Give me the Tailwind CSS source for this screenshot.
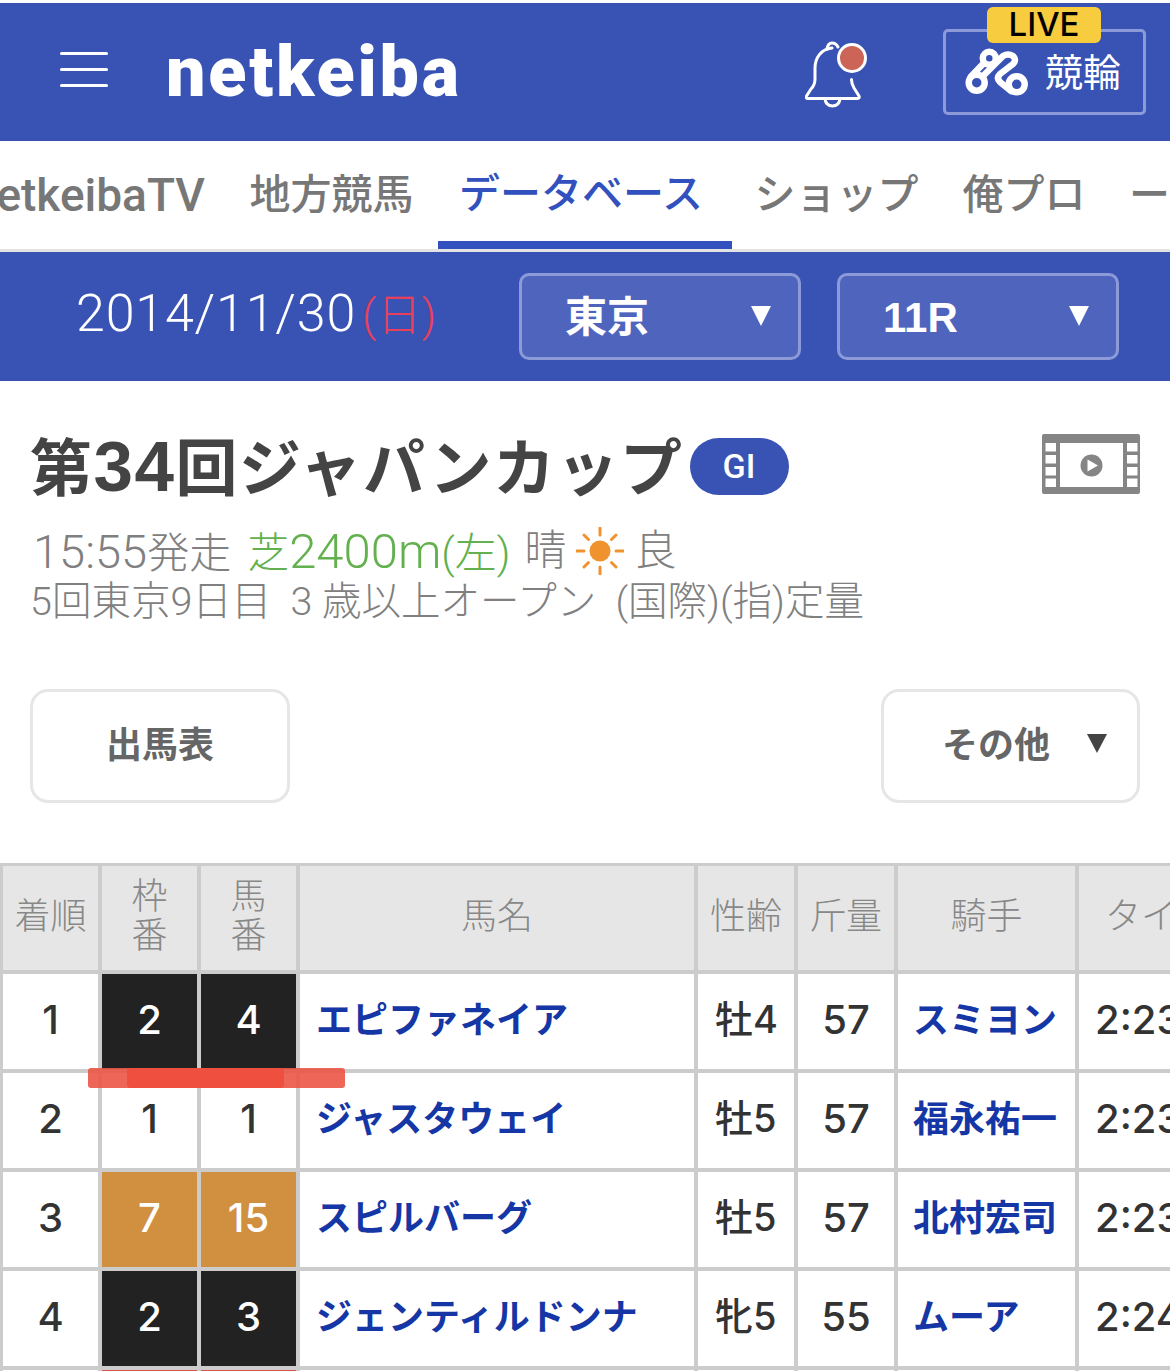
<!DOCTYPE html>
<html lang="ja">
<head>
<meta charset="UTF-8" />
<meta name="viewport" content="width=device-width, initial-scale=1.0" />
<title>netkeiba</title>
<script src="https://cdn.jsdelivr.net/npm/@tailwindcss/browser@4"></script>
</head>
<body class="bg-white font-['Liberation_Sans','Noto_Sans_CJK_JP',sans-serif] w-[1170px] h-[1371px] overflow-hidden">

<!-- Header -->
<div class="mt-[3px] h-[138px] bg-[#3953b5] flex items-center relative text-white">
  <div class="ml-[60px] w-[48px] flex flex-col gap-[13px] mt-[-6px]">
    <div class="h-[3px] bg-white rounded-full"></div>
    <div class="h-[3px] bg-white rounded-full"></div>
    <div class="h-[3px] bg-white rounded-full"></div>
  </div>
  <div class="ml-[58px] w-[294px] font-['Roboto'] font-black text-[70px] leading-none tracking-[2.800px]">netkeiba</div>
  <svg class="ml-[345px] mt-[6px]" width="64" height="68" viewBox="0 0 64 68" fill="none" stroke="white" stroke-width="3" stroke-linecap="round" stroke-linejoin="round">
    <path d="M27 7C16 8 10 17 10 27L10 38Q10 44 6 48L1.500 55Q0.500 57.500 3 57.500L52 57.500Q55 57.500 54 55L49 47Q46.500 43 46.500 38.500"/>
    <path d="M22 8Q23 2 27 2Q31 2 33 6"/>
    <path d="M20 58Q21 65 27.500 65Q34 65 35 58"/>
    <circle cx="47" cy="17" r="13.500" fill="#cc6558"/>
  </svg>
  <div class="ml-[74px] w-[203px] h-[86px] border-[3px] border-[#8c9bd8] rounded-[5px] flex items-center relative">
    <div class="absolute left-[41px] top-[-25px] w-[114px] h-[36px] bg-[#f8cc3f] rounded-[6px] text-black font-['Inter'] font-medium text-[33px] leading-[34px] text-center">LIVE</div>
    <svg class="ml-[14px] mt-[-2px] shrink-0" width="75" height="60" viewBox="0 0 75 60" fill="none" stroke="white" stroke-width="6.500" stroke-linecap="round" stroke-linejoin="round">
      <circle cx="16.700" cy="41.700" r="8"/>
      <circle cx="56.700" cy="43.300" r="8"/>
      <circle cx="29.300" cy="17.300" r="6.500"/>
      <path d="M22 24L11 35.500"/>
      <path d="M23 35L43 15Q48 12 53 15Q57 19 53 23L40 33Q36 37 40 41L51 50"/>
    </svg>
    <div class="ml-[10px] text-[38px] leading-none mt-[2px] whitespace-nowrap">競輪</div>
  </div>
</div>

<!-- Tabs -->
<div class="h-[111px] border-b-[3px] border-[#e3e3e3] flex text-[41px] leading-none font-medium text-[#777] overflow-hidden whitespace-nowrap">
  <div class="w-[227px] shrink-0 flex justify-end items-center pr-[22px] overflow-hidden font-['Roboto'] text-[46px]">netkeibaTV</div>
  <div class="w-[211px] shrink-0 flex justify-center items-center pr-[2px]">地方競馬</div>
  <div class="w-[294px] shrink-0 h-[108px] flex justify-center items-center pt-[6px] pr-[8px] text-[#3251be] border-b-[8px] border-[#3251be] mb-[-3px]">データベース</div>
  <div class="w-[209px] shrink-0 flex justify-center items-center">ショップ</div>
  <div class="w-[166px] shrink-0 flex justify-center items-center">俺プロ</div>
  <div class="shrink-0 flex items-center pl-[22px]">ー</div>
</div>

<!-- Date bar -->
<div class="h-[129px] bg-[#3953b5] flex items-center text-white">
  <div class="ml-[76px] w-[443px] font-['Roboto','Noto_Sans_CJK_JP'] text-[52px] leading-none font-light tracking-[0.800px] mt-[-6px]">2014/11/30<span class="text-[#e8405a] text-[44px] ml-[6px]">(日)</span></div>
  <div class="w-[282px] h-[87px] bg-[#4f65bd] border-[3px] border-[#8c9bd8] rounded-[10px] flex items-center pl-[43px] pr-[27px] justify-between font-bold text-[42px] mt-[-1px]">
    <span class="mt-[3px]">東京</span>
    <span class="w-0 h-0 border-x-[10px] border-x-transparent border-t-[20px] border-t-white"></span>
  </div>
  <div class="ml-[36px] w-[282px] h-[87px] bg-[#4f65bd] border-[3px] border-[#8c9bd8] rounded-[10px] flex items-center pl-[43px] pr-[27px] justify-between font-bold text-[42px] mt-[-1px]">
    <span class="mt-[3px]">11R</span>
    <span class="w-0 h-0 border-x-[10px] border-x-transparent border-t-[20px] border-t-white"></span>
  </div>
</div>

<!-- Race info -->
<div class="px-[30px]">
  <div class="flex items-center h-[60px] mt-[55px] relative">
    <h1 class="text-[62px] leading-none font-bold text-[#444] tracking-[1.500px] whitespace-nowrap">第<span class="text-[71px]">34</span>回ジャパンカップ</h1>
    <span class="ml-[6px] w-[99px] h-[57px] rounded-full bg-[#3953b5] text-white font-['Roboto'] font-medium text-[34px] flex items-center justify-center">GI</span>
    <svg class="ml-auto mt-[-4px]" width="98" height="60" viewBox="0 0 98 60">
      <rect width="98" height="60" rx="2" fill="#858585"/>
      <g fill="white">
        <rect x="3.500" y="9" width="10.500" height="8.500"/><rect x="3.500" y="21" width="10.500" height="8.500"/><rect x="3.500" y="33" width="10.500" height="8.500"/><rect x="3.500" y="44.500" width="10.500" height="8.500"/>
        <rect x="85" y="9" width="10.500" height="8.500"/><rect x="85" y="21" width="10.500" height="8.500"/><rect x="85" y="33" width="10.500" height="8.500"/><rect x="85" y="44.500" width="10.500" height="8.500"/>
        <rect x="18" y="9" width="63" height="44"/>
      </g>
      <circle cx="49.500" cy="31.500" r="11" fill="#858585"/>
      <path d="M45.500 25.500L56 31.500L45.500 37.500Z" fill="white"/>
    </svg>
  </div>
  <div class="flex items-center h-[50px] mt-[30px] font-['Roboto','Noto_Sans_CJK_JP'] text-[42px] leading-none font-light text-[#808080] whitespace-nowrap">
    <span class="ml-[3px]"><span class="text-[47px]">15:55</span>発走</span>
    <span class="ml-[16px] text-[#62b04e]">芝<span class="text-[49px]">2400m</span>(左)</span>
    <span class="ml-[14px]">晴</span>
    <svg class="ml-[9px]" width="48" height="48" viewBox="0 0 48 48" stroke="#f0922e" stroke-width="3" stroke-linecap="round">
      <circle cx="24" cy="24" r="10.500" fill="#f0922e" stroke="none"/>
      <path d="M24 1V8M24 40V47M1 24H8M40 24H47M8 8L12.500 12.500M35.500 35.500L40 40M8 40L12.500 35.500M35.500 12.500L40 8"/>
    </svg>
    <span class="ml-[11px]">良</span>
  </div>
  <div class="mt-[1px] h-[50px] flex items-center font-['Roboto','Noto_Sans_CJK_JP'] text-[39.500px] leading-none font-light text-[#808080] whitespace-nowrap">5回東京9日目&nbsp;&nbsp;3 歳以上オープン&nbsp;&nbsp;(国際)(指)定量</div>

  <!-- Buttons -->
  <div class="flex justify-between mt-[62px]">
    <div class="w-[260px] h-[114px] border-[3px] border-[#e6e6e6] rounded-[18px] flex items-center justify-center text-[36px] font-bold text-[#666]">出馬表</div>
    <div class="w-[259px] h-[114px] border-[3px] border-[#e6e6e6] rounded-[18px] flex items-center pl-[58px] pr-[30px] justify-between text-[36px] font-bold text-[#666]">
      <span>その他</span>
      <span class="w-0 h-0 border-x-[10px] border-x-transparent border-t-[19px] border-t-[#444] mt-[-6px]"></span>
    </div>
  </div>
</div>

<!-- Result table -->
<div class="relative mt-[60px] overflow-hidden">
  <div class="w-[1300px] bg-[#cccccc] pt-[3px] pl-[3px] grid grid-cols-[95px_95px_95px_394px_96px_96px_177px_220px] grid-rows-[104px_95px_95px_95px_95px_10px] gap-[4px] font-['Inter','Noto_Sans_CJK_JP'] font-medium text-[40px] text-[#333] [&>div]:pb-[4px]">
    <!-- head -->
    <div class="bg-[#e6e6e6] text-[#888] text-[36px] font-light flex items-center justify-center">着順</div>
    <div class="bg-[#e6e6e6] text-[#888] text-[36px] leading-[39px] font-light flex items-center justify-center text-center">枠<br>番</div>
    <div class="bg-[#e6e6e6] text-[#888] text-[36px] leading-[39px] font-light flex items-center justify-center text-center">馬<br>番</div>
    <div class="bg-[#e6e6e6] text-[#888] text-[36px] font-light flex items-center justify-center">馬名</div>
    <div class="bg-[#e6e6e6] text-[#888] text-[36px] font-light flex items-center justify-center">性齢</div>
    <div class="bg-[#e6e6e6] text-[#888] text-[36px] font-light flex items-center justify-center">斤量</div>
    <div class="bg-[#e6e6e6] text-[#888] text-[36px] font-light flex items-center justify-center">騎手</div>
    <div class="bg-[#e6e6e6] text-[#888] text-[36px] font-light flex items-center pl-[26px] whitespace-nowrap">タイム</div>

    <!-- 1 -->
    <div class="bg-white flex items-center justify-center">1</div>
    <div class="bg-[#222] text-white flex items-center justify-center">2</div>
    <div class="bg-[#222] text-white flex items-center justify-center">4</div>
    <div class="bg-white flex items-center pl-[16px] text-[36px] font-bold text-[#1537a5]">エピファネイア</div>
    <div class="bg-white flex items-center pl-[17px] text-[38px]">牡4</div>
    <div class="bg-white flex items-center justify-center">57</div>
    <div class="bg-white flex items-center pl-[15px] text-[36px] font-bold text-[#1537a5]">スミヨン</div>
    <div class="bg-white flex items-center pl-[16px]">2:23.1</div>

    <!-- 2 -->
    <div class="bg-white flex items-center justify-center">2</div>
    <div class="bg-white flex items-center justify-center">1</div>
    <div class="bg-white flex items-center justify-center">1</div>
    <div class="bg-white flex items-center pl-[16px] text-[36px] font-bold text-[#1537a5]">ジャスタウェイ</div>
    <div class="bg-white flex items-center pl-[17px] text-[38px]">牡5</div>
    <div class="bg-white flex items-center justify-center">57</div>
    <div class="bg-white flex items-center pl-[15px] text-[36px] font-bold text-[#1537a5]">福永祐一</div>
    <div class="bg-white flex items-center pl-[16px]">2:23.8</div>

    <!-- 3 -->
    <div class="bg-white flex items-center justify-center">3</div>
    <div class="bg-[#d18f40] text-white flex items-center justify-center">7</div>
    <div class="bg-[#d18f40] text-white flex items-center justify-center">15</div>
    <div class="bg-white flex items-center pl-[16px] text-[36px] font-bold text-[#1537a5]">スピルバーグ</div>
    <div class="bg-white flex items-center pl-[17px] text-[38px]">牡5</div>
    <div class="bg-white flex items-center justify-center">57</div>
    <div class="bg-white flex items-center pl-[15px] text-[36px] font-bold text-[#1537a5]">北村宏司</div>
    <div class="bg-white flex items-center pl-[16px]">2:23.9</div>

    <!-- 4 -->
    <div class="bg-white flex items-center justify-center">4</div>
    <div class="bg-[#222] text-white flex items-center justify-center">2</div>
    <div class="bg-[#222] text-white flex items-center justify-center">3</div>
    <div class="bg-white flex items-center pl-[16px] text-[36px] font-bold text-[#1537a5]">ジェンティルドンナ</div>
    <div class="bg-white flex items-center pl-[17px] text-[38px]">牝5</div>
    <div class="bg-white flex items-center justify-center">55</div>
    <div class="bg-white flex items-center pl-[15px] text-[36px] font-bold text-[#1537a5]">ムーア</div>
    <div class="bg-white flex items-center pl-[16px]">2:24.0</div>

    <!-- next row, cut off by the window -->
    <div class="bg-white"></div>
    <div class="bg-[#d9534f]"></div>
    <div class="bg-[#d9534f]"></div>
    <div class="bg-white"></div>
    <div class="bg-white"></div>
    <div class="bg-white"></div>
    <div class="bg-white"></div>
    <div class="bg-white"></div>
  </div>
  <!-- red marker stroke over the table -->
  <div class="absolute left-[88px] top-[205px] w-[257px] h-[20px] bg-[#ec5546]/90 rounded-[3px]"></div>
  <div class="absolute left-[127px] top-[205px] w-[157px] h-[20px] bg-[#ee4f3f] rounded-[4px]"></div>
</div>

</body>
</html>
